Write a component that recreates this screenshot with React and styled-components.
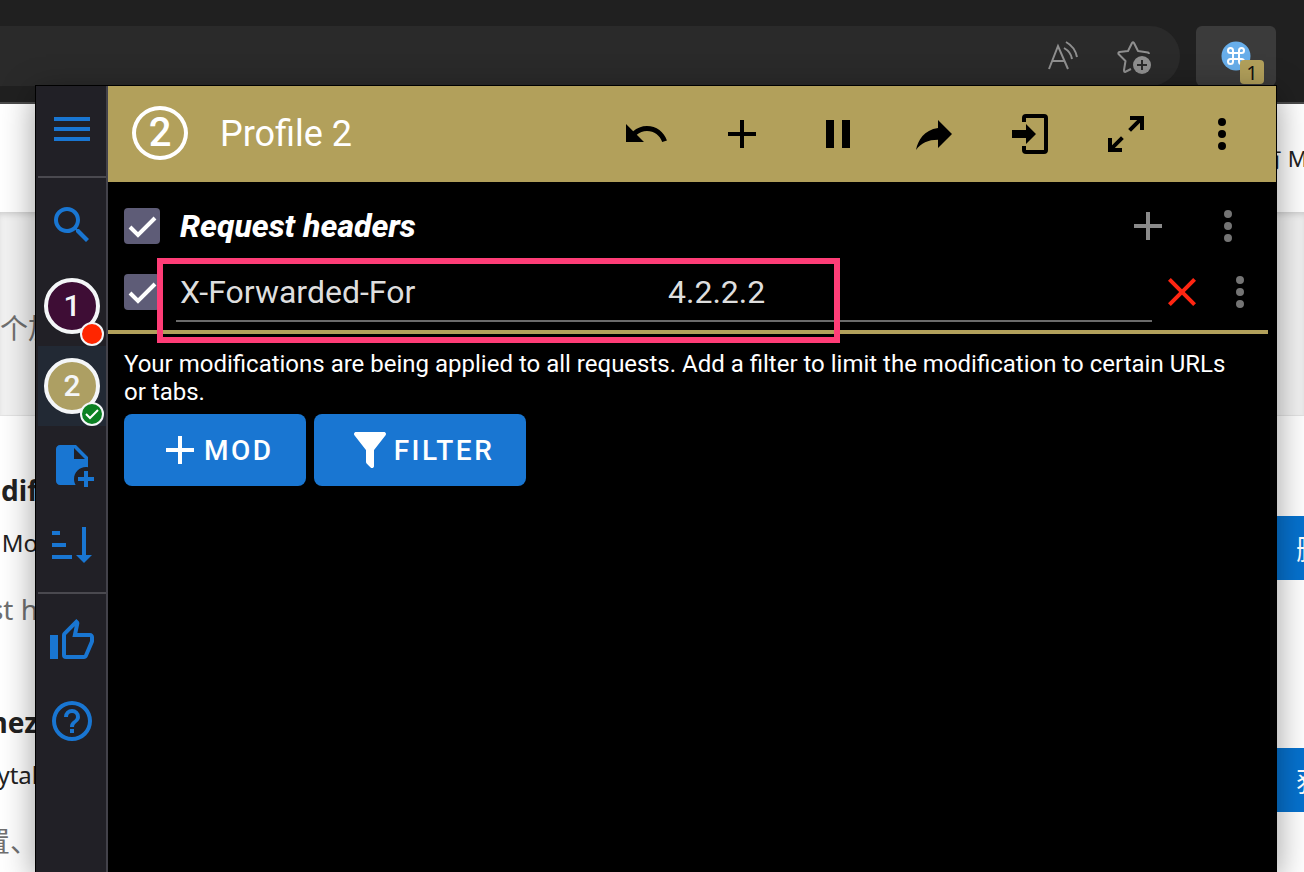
import React from 'react';
import styled, { createGlobalStyle } from 'styled-components';

const GlobalStyle = createGlobalStyle`
  *, *::before, *::after { box-sizing: border-box; }
  body { margin: 0; background: #fff; }
  button, input { font: inherit; letter-spacing: inherit; }
`;

const gold = '#b2a05b';
const blue = '#1976d2';

const paths = {
  menu: 'M3,6H21V8H3V6M3,11H21V13H3V11M3,16H21V18H3V16Z',
  search:
    'M9.5,3A6.5,6.5 0 0,1 16,9.5C16,11.11 15.41,12.59 14.44,13.73L14.71,14H15.5L20.5,19L19,20.5L14,15.5V14.71L13.73,14.44C12.59,15.41 11.11,16 9.5,16A6.5,6.5 0 0,1 3,9.5A6.5,6.5 0 0,1 9.5,3M9.5,5C7,5 5,7 5,9.5C5,12 7,14 9.5,14C12,14 14,12 14,9.5C14,7 12,5 9.5,5Z',
  filePlus:
    'M14 2H6C4.89 2 4 2.89 4 4V20C4 21.11 4.89 22 6 22H13.81C13.28 21.09 13 20.05 13 19C13 15.69 15.69 13 19 13C19.34 13 19.67 13.03 20 13.08V8L14 2M13 9V3.5L18.5 9H13M23 20H20V23H18V20H15V18H18V15H20V18H23V20Z',
  sort: 'M19 17H22L18 21L14 17H17V3H19M2 17H12V19H2M6 5V7H2V5M2 11H9V13H2V11Z',
  thumb:
    'M5,9V21H1V9H5M9,21A2,2 0 0,1 7,19V9C7,8.45 7.22,7.95 7.59,7.59L14.17,1L15.23,2.06C15.5,2.33 15.67,2.7 15.67,3.11L15.64,3.43L14.69,8H21C22.11,8 23,8.9 23,10V12C23,12.26 22.95,12.5 22.86,12.73L19.84,19.78C19.54,20.5 18.83,21 18,21H9M9,19H18.03L21,12V10H12.21L13.34,4.68L9,9.03V19Z',
  help: 'M11,18H13V16H11V18M12,2A10,10 0 0,0 2,12A10,10 0 0,0 12,22A10,10 0 0,0 22,12A10,10 0 0,0 12,2M12,20C7.59,20 4,16.41 4,12C4,7.59 7.59,4 12,4C16.41,4 20,7.59 20,12C20,16.41 16.41,20 12,20M12,6A4,4 0 0,0 8,10H10A2,2 0 0,1 12,8A2,2 0 0,1 14,10C14,12 11,11.75 11,15H13C13,12.75 16,12.5 16,10A4,4 0 0,0 12,6Z',
  undo: 'M12.5,8C9.85,8 7.45,9 5.6,10.6L2,7V16H11L7.38,12.38C8.77,11.22 10.54,10.5 12.5,10.5C16.04,10.5 19.05,12.81 20.1,16L22.47,15.22C21.08,11.03 17.15,8 12.5,8Z',
  plus: 'M19,13H13V19H11V13H5V11H11V5H13V11H19V13Z',
  pause: 'M14,19H18V5H14M6,19H10V5H6V19Z',
  share: 'M21,12L14,5V9C7,10 4,15 3,20C5.5,16.5 9,14.9 14,14.9V19L21,12Z',
  login:
    'M10,17V14H3V10H10V7L15,12L10,17M10,2H19A2,2 0 0,1 21,4V20A2,2 0 0,1 19,22H10A2,2 0 0,1 8,20V18H10V20H19V4H10V6H8V4A2,2 0 0,1 10,2Z',
  expand:
    'M10,21V19H6.41L10.91,14.5L9.5,13.09L5,17.59V14H3V21H10M14.5,10.91L19,6.41V10H21V3H14V5H17.59L13.09,9.5L14.5,10.91Z',
  dots: 'M12,16A2,2 0 0,1 14,18A2,2 0 0,1 12,20A2,2 0 0,1 10,18A2,2 0 0,1 12,16M12,10A2,2 0 0,1 14,12A2,2 0 0,1 12,14A2,2 0 0,1 10,12A2,2 0 0,1 12,10M12,4A2,2 0 0,1 14,6A2,2 0 0,1 12,8A2,2 0 0,1 10,6A2,2 0 0,1 12,4Z',
  close:
    'M19,6.41L17.59,5L12,10.59L6.41,5L5,6.41L10.59,12L5,17.59L6.41,19L12,13.41L17.59,19L19,17.59L13.41,12L19,6.41Z',
  filter:
    'M14,12V19.88C14.04,20.18 13.94,20.5 13.71,20.71C13.32,21.1 12.69,21.1 12.3,20.71L10.29,18.7C10.06,18.47 9.96,18.16 10,17.87V12H9.97L4.21,4.62C3.87,4.19 3.95,3.56 4.38,3.22C4.57,3.08 4.78,3 5,3V3H19V3C19.22,3 19.43,3.08 19.62,3.22C20.05,3.56 20.13,4.19 19.79,4.62L14.03,12H14Z',
};

const Svg = styled.svg`
  display: block;
  flex: none;
`;

const Icon = ({ name, size = 48 }) => (
  <Svg width={size} height={size} viewBox="0 0 24 24" fill="currentColor" aria-hidden="true">
    <path d={paths[name]} />
  </Svg>
);

/* Browser window behind the popup */

const Screen = styled.div`
  position: relative;
  min-height: 100vh;
  height: 100vh;
  overflow: hidden;
  display: flex;
  flex-direction: column;
`;

const BrowserBar = styled.header`
  flex: none;
  display: flex;
  gap: 16px;
  padding: 26px 28px 16px 0;
  background: #202020;
  border-bottom: 2px solid #4a4a4a;
`;

const AddressBar = styled.div`
  flex: 1;
  display: flex;
  justify-content: flex-end;
  align-items: center;
  gap: 36px;
  height: 60px;
  padding-right: 28px;
  background: #2a2a2a;
  border-radius: 0 30px 30px 0;
`;

const ChromeButton = styled.button`
  padding: 0;
  border: 0;
  background: none;
  color: #8f8f8f;
`;

const ExtensionButton = styled.button`
  position: relative;
  display: flex;
  justify-content: center;
  width: 80px;
  height: 60px;
  padding: 15px 0 0;
  border: 0;
  border-radius: 6px;
  background: #3b3b3b;
`;

const ExtensionCount = styled.span`
  position: absolute;
  right: 12px;
  bottom: 2px;
  width: 24px;
  height: 24px;
  border-radius: 4px;
  background: ${gold};
  color: #111;
  font: 20px/26px 'Noto Sans', sans-serif;
  text-align: center;
`;

const WebPage = styled.main`
  flex: 1;
  display: flex;
  flex-direction: column;
  overflow: hidden;
  font-family: 'Noto Sans', 'Noto Sans CJK SC', sans-serif;
  color: #222;
`;

const PageBand = styled.section`
  flex: none;
  display: flex;
  align-items: center;
  height: 108px;
  justify-content: flex-end;
  background: #fff;
  font-size: 22px;
  line-height: 32px;
  white-space: nowrap;
`;

const IntroBand = styled(PageBand)`
  height: 203px;
  padding-top: 28px;
  justify-content: flex-start;
  background: #f3f3f3;
  color: #707070;
  font-size: 28px;
  box-shadow: inset 0 4px 6px -2px #ccc;
`;

const BandText = styled.span`
  width: 44px;
`;

const ExtensionList = styled.section`
  flex: 1;
  padding-top: 48px;
  overflow: hidden;
  background: #fff;
  border-top: 1px solid #e4e4e4;
`;

const ExtensionItem = styled.article`
  display: flex;
  justify-content: space-between;
  height: 232px;
  overflow: hidden;
`;

const ItemText = styled.div`
  width: 38px;
  display: flex;
  flex-direction: column;
  align-items: flex-end;
  white-space: nowrap;
`;

const ItemTitle = styled.h2`
  margin: 0;
  font-size: 28px;
  line-height: 52px;
  font-weight: 700;
`;

const ItemVendor = styled.p`
  margin: 0;
  font-size: 24px;
  line-height: 54px;
`;

const ItemDetail = styled.p`
  margin: 0;
  font-size: 28px;
  line-height: 78px;
  color: #707070;
`;

const StoreButton = styled.button`
  width: 64px;
  height: 64px;
  margin-top: 52px;
  padding: 0 0 0 56px;
  overflow: hidden;
  border: 0;
  background: #0672cf;
  color: #fff;
  font-size: 28px;
  text-align: left;
  white-space: nowrap;
`;

/* Extension popup */

const Popup = styled.div`
  position: absolute;
  top: 85px;
  left: 35px;
  right: 27px;
  bottom: 0;
  display: flex;
  border: 1px solid #000;
  border-bottom: 0;
  background: #000;
  color: #fff;
  box-shadow: 0 8px 32px rgba(0, 0, 0, 0.4);
  font-family: Roboto, sans-serif;
`;

const Sidebar = styled.nav`
  flex: none;
  display: flex;
  flex-direction: column;
  width: 72px;
  padding-left: 2px;
  background: #212026;
  border-right: 2px solid #43424a;
`;

const SidebarGroup = styled.div`
  display: flex;
  flex-direction: column;
  padding: 8px 0 6px;
  border-bottom: ${(p) => (p.$last ? '0' : '2px solid #4a494f')};
`;

const SidebarButton = styled.button`
  display: flex;
  align-items: center;
  justify-content: center;
  height: 80px;
  padding: 0 0 2px;
  border: 0;
  background: none;
  color: ${blue};
`;

const MenuGroup = styled(SidebarGroup)`
  padding: 4px 0 6px;
`;

const ProfileButton = styled(SidebarButton)`
  padding: 0;
  background: ${(p) => (p.$active ? '#222934' : 'none')};
`;

const Avatar = styled.span`
  position: relative;
  display: block;
  width: 56px;
  height: 56px;
  border: 4px solid #f4f6f8;
  border-radius: 50%;
  background: ${(p) => p.$fill};
  color: #f4f6f8;
  font-size: 30px;
  font-weight: 500;
  line-height: 48px;
  text-align: center;
`;

const AvatarStatus = styled.span`
  position: absolute;
  right: -8px;
  bottom: -16px;
  display: flex;
  align-items: center;
  justify-content: center;
  width: 24px;
  height: 24px;
  border: 2px solid #f4f6f8;
  border-radius: 50%;
  background: ${(p) => p.$fill};
`;

const Content = styled.div`
  flex: 1;
  min-width: 0;
  display: flex;
  flex-direction: column;
`;

const TopBar = styled.header`
  display: flex;
  align-items: center;
  height: 96px;
  padding: 0 30px 0 24px;
  background: ${gold};
`;

const ProfileNumber = styled.span`
  flex: none;
  width: 56px;
  height: 54px;
  margin-bottom: 2px;
  border: 4px solid #fff;
  border-radius: 50%;
  font-size: 40px;
  font-weight: 500;
  line-height: 46px;
  text-align: center;
`;

const ProfileTitle = styled.h1`
  flex: 1;
  margin: 0 0 0 32px;
  font-size: 36px;
  font-weight: 400;
  line-height: 48px;
`;

const Actions = styled.div`
  display: flex;
  gap: 48px;
`;

const IconButton = styled.button`
  flex: none;
  width: 48px;
  height: 48px;
  padding: 0;
  border: 0;
  background: none;
  color: ${(p) => p.$color};
`;

const Modifications = styled.section`
  margin-right: 8px;
  padding: 11px 0 5px 16px;
  border-bottom: 4px solid ${gold};
`;

const Row = styled.div`
  display: flex;
  align-items: center;
  height: 66px;
  padding-right: ${(p) => p.$inset}px;
`;

const CheckLabel = styled.label`
  position: relative;
  flex: none;
  display: block;
  width: 36px;
  height: 36px;
`;

const CheckInput = styled.input`
  appearance: none;
  display: block;
  width: 36px;
  height: 36px;
  margin: 0;
  border-radius: 4px;
  background: #5e5c77;
`;

const CheckMark = styled.svg`
  position: absolute;
  inset: 0;
  pointer-events: none;
`;

const SectionTitle = styled.h2`
  flex: 1;
  margin: 0 0 0 20px;
  font-size: 32px;
  font-style: italic;
  font-weight: 800;
  line-height: 40px;
`;

const SectionActions = styled.div`
  display: flex;
  gap: 32px;
`;

const HeaderFields = styled.div`
  flex: 1;
  display: flex;
  height: 60px;
  margin: 0 6px 0 16px;
  border-bottom: 2px solid #6a6a6a;
`;

const FieldInput = styled.input`
  flex: 1;
  min-width: 0;
  padding: 2px 4px 0;
  border: 0;
  outline: 0;
  background: none;
  color: #dedede;
  font-size: 32px;
  line-height: 40px;
`;

const RowActions = styled.div`
  display: flex;
  gap: 10px;
`;

const Hint = styled.p`
  margin: 0;
  padding: 16px 24px 8px 16px;
  font-size: 24px;
  line-height: 28px;
`;

const ButtonRow = styled.div`
  display: flex;
  gap: 8px;
  padding-left: 16px;
`;

const PrimaryButton = styled.button`
  display: flex;
  align-items: center;
  height: 72px;
  padding: 0 32px;
  border: 0;
  border-radius: 8px;
  background: ${blue};
  color: #fff;
  font-size: 28px;
  font-weight: 500;
  letter-spacing: 0.09em;
`;

const Highlight = styled.div`
  position: absolute;
  top: 258px;
  left: 157px;
  width: 683px;
  height: 85px;
  border: 6px solid #ff3d77;
  pointer-events: none;
`;

const Checkbox = ({ label }) => (
  <CheckLabel>
    <CheckInput type="checkbox" defaultChecked aria-label={label} />
    <CheckMark width="36" height="36" viewBox="0 0 36 36" fill="none" stroke="#fff" strokeWidth="4">
      <path d="M6 19L14 27L31 10" />
    </CheckMark>
  </CheckLabel>
);

const ReadAloudIcon = () => (
  <Svg width="34" height="34" viewBox="0 0 34 34" fill="none" stroke="currentColor" strokeWidth="2">
    <path d="M3 30L12 7L22 30M6 22H19M18 9Q25 13 26 20M20 3Q29 8 31 18" />
  </Svg>
);

const FavoriteIcon = () => (
  <Svg width="36" height="36" viewBox="0 0 36 36" fill="none" stroke="currentColor" strokeWidth="2">
    <path
      d="M15 31L9 34Q8 34 8 32L9.500 23L2.500 16Q2 14.500 3.500 14L12 13L16 5Q17 3.500 18 5L22 13L32 14.500Q33 15 33 16"
      strokeLinejoin="round"
    />
    <circle cx="26" cy="27" r="9" fill="currentColor" stroke="none" />
    <path d="M26 22V32M21 27H31" stroke="#2a2a2a" />
  </Svg>
);

const CommandIcon = () => (
  <Svg width="30" height="30" viewBox="0 0 30 30" fill="none">
    <circle cx="15" cy="15" r="14.500" fill="#68aeea" />
    <path
      d="M12 12H18V18H12ZM12 12H9.500A2.500 2.500 0 1 1 12 9.500ZM18 12V9.500A2.500 2.500 0 1 1 20.500 12ZM18 18H20.500A2.500 2.500 0 1 1 18 20.500ZM12 18V20.500A2.500 2.500 0 1 1 9.500 18Z"
      stroke="#fff"
      strokeWidth="2"
    />
  </Svg>
);

const actions = [
  ['undo', 'Undo'],
  ['plus', 'Add'],
  ['pause', 'Pause'],
  ['share', 'Share'],
  ['login', 'Import'],
  ['expand', 'Expand'],
  ['dots', 'More'],
];

export default function App() {
  return (
    <Screen>
      <GlobalStyle />
      <BrowserBar>
        <AddressBar>
          <ChromeButton aria-label="Read aloud"><ReadAloudIcon /></ChromeButton>
          <ChromeButton aria-label="Add to favorites"><FavoriteIcon /></ChromeButton>
        </AddressBar>
        <ExtensionButton aria-label="Extension">
          <CommandIcon />
          <ExtensionCount>1</ExtensionCount>
        </ExtensionButton>
      </BrowserBar>
      <WebPage>
        <PageBand>
          <BandText>有 M</BandText>
        </PageBand>
        <IntroBand>
          <BandText>个加</BandText>
        </IntroBand>
        <ExtensionList>
          <ExtensionItem>
            <ItemText>
              <ItemTitle>odif</ItemTitle>
              <ItemVendor>Mo</ItemVendor>
              <ItemDetail>st h</ItemDetail>
            </ItemText>
            <StoreButton>删</StoreButton>
          </ExtensionItem>
          <ExtensionItem>
            <ItemText>
              <ItemTitle>nez</ItemTitle>
              <ItemVendor>Tytal</ItemVendor>
              <ItemDetail>置、</ItemDetail>
            </ItemText>
            <StoreButton>获</StoreButton>
          </ExtensionItem>
        </ExtensionList>
      </WebPage>

      <Popup>
        <Sidebar>
          <MenuGroup>
            <SidebarButton aria-label="Menu"><Icon name="menu" /></SidebarButton>
          </MenuGroup>
          <SidebarGroup>
            <SidebarButton aria-label="Search"><Icon name="search" /></SidebarButton>
            <ProfileButton>
              <Avatar $fill="#3e0d35">
                1
                <AvatarStatus $fill="#ff2600" />
              </Avatar>
            </ProfileButton>
            <ProfileButton $active>
              <Avatar $fill="#ad9f63">
                2
                <AvatarStatus $fill="#0b8022">
                  <Svg width="20" height="20" viewBox="0 0 20 20" fill="none" stroke="#fff" strokeWidth="2">
                    <path d="M4 10L8 14L16 6" />
                  </Svg>
                </AvatarStatus>
              </Avatar>
            </ProfileButton>
            <SidebarButton aria-label="New profile"><Icon name="filePlus" /></SidebarButton>
            <SidebarButton aria-label="Sort profiles"><Icon name="sort" /></SidebarButton>
          </SidebarGroup>
          <SidebarGroup $last>
            <SidebarButton aria-label="Rate"><Icon name="thumb" /></SidebarButton>
            <SidebarButton aria-label="Help"><Icon name="help" /></SidebarButton>
          </SidebarGroup>
        </Sidebar>

        <Content>
          <TopBar>
            <ProfileNumber>2</ProfileNumber>
            <ProfileTitle>Profile 2</ProfileTitle>
            <Actions>
              {actions.map(([name, label]) => (
                <IconButton key={name} aria-label={label} $color="#000">
                  <Icon name={name} />
                </IconButton>
              ))}
            </Actions>
          </TopBar>

          <Modifications>
            <Row $inset={16}>
              <Checkbox label="Enable request headers" />
              <SectionTitle>Request headers</SectionTitle>
              <SectionActions>
                <IconButton aria-label="Add header" $color="#8a8a8a"><Icon name="plus" /></IconButton>
                <IconButton aria-label="Section menu" $color="#747474"><Icon name="dots" /></IconButton>
              </SectionActions>
            </Row>
            <Row $inset={4}>
              <Checkbox label="Enable X-Forwarded-For" />
              <HeaderFields>
                <FieldInput aria-label="Name" defaultValue="X-Forwarded-For" />
                <FieldInput aria-label="Value" defaultValue="4.2.2.2" />
              </HeaderFields>
              <RowActions>
                <IconButton aria-label="Remove" $color="#ff2612"><Icon name="close" /></IconButton>
                <IconButton aria-label="Header menu" $color="#747474"><Icon name="dots" /></IconButton>
              </RowActions>
            </Row>
          </Modifications>

          <Hint>
            Your modifications are being applied to all requests. Add a filter to limit the
            modification to certain URLs or tabs.
          </Hint>
          <ButtonRow>
            <PrimaryButton><Icon name="plus" />MOD</PrimaryButton>
            <PrimaryButton><Icon name="filter" />FILTER</PrimaryButton>
          </ButtonRow>
        </Content>
      </Popup>
      <Highlight />
    </Screen>
  );
}
